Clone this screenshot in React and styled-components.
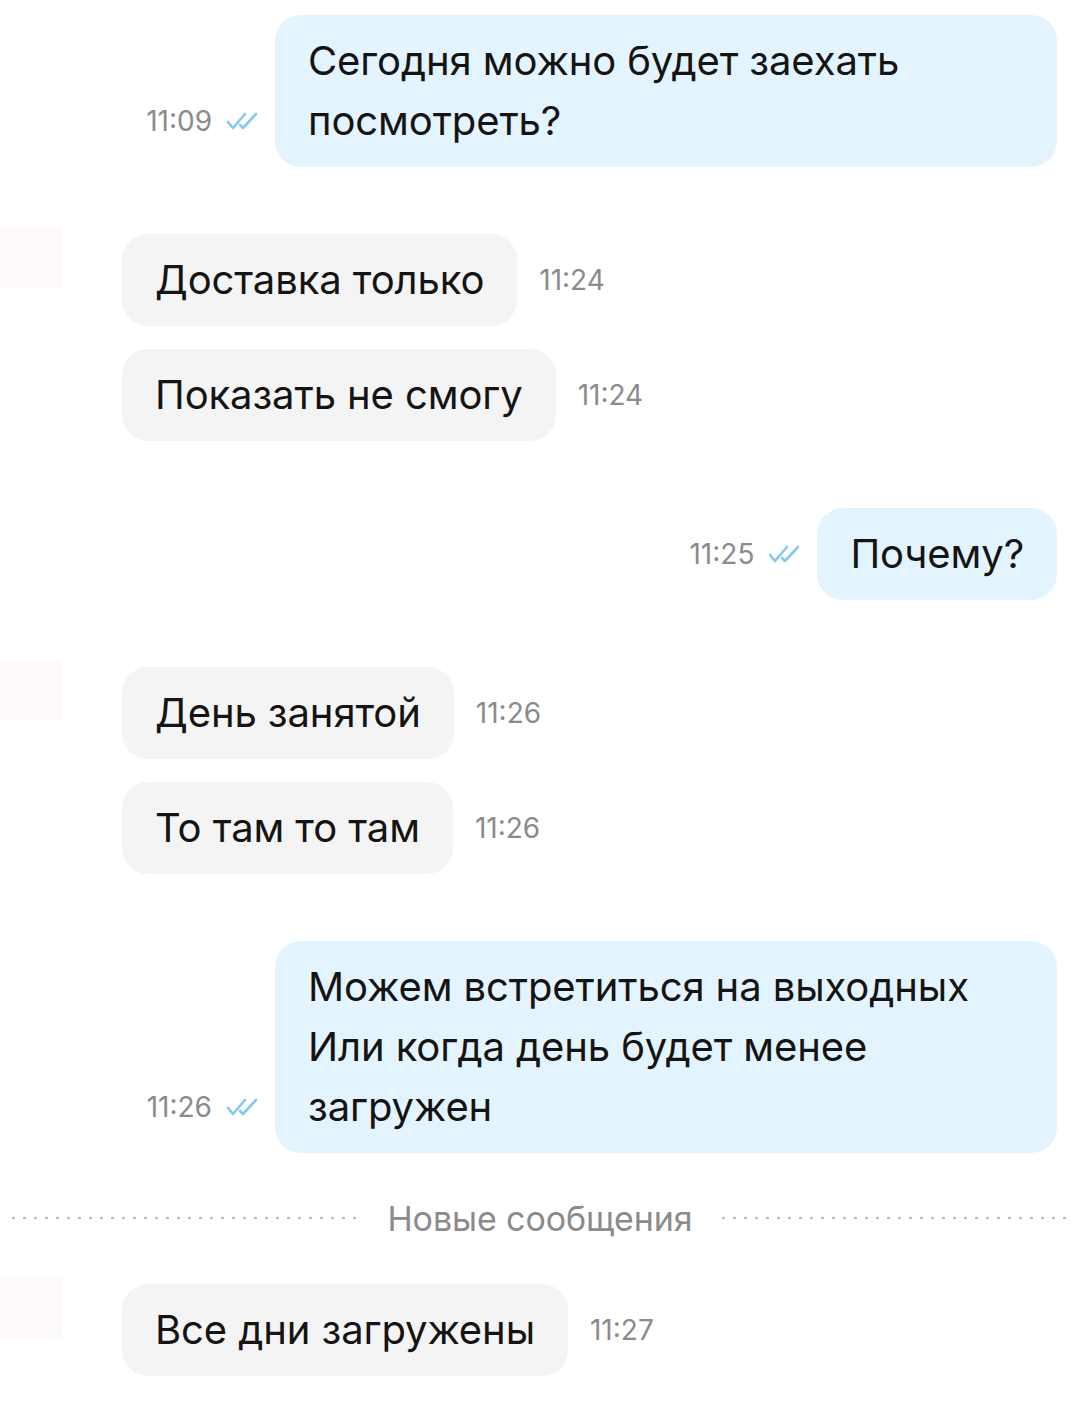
import styled, { createGlobalStyle } from "styled-components"

const GlobalStyle = createGlobalStyle`
    body{
        margin:0;
        background:#fff;
        font-family: Inter, Roboto, "Liberation Sans", sans-serif;
    }
`

const messages = [
    { id: 1, out: true, time: "11:09", text: "Сегодня можно будет заехать посмотреть?" },
    { id: 2, out: false, group: [
        { time: "11:24", text: "Доставка только" },
        { time: "11:24", text: "Показать не смогу" },
    ]},
    { id: 3, out: true, time: "11:25", text: "Почему?" },
    { id: 4, out: false, group: [
        { time: "11:26", text: "День занятой" },
        { time: "11:26", text: "То там то там" },
    ]},
    { id: 5, out: true, time: "11:26", text: "Можем встретиться на выходных\nИли когда день будет менее загружен" },
]

function Check(){
    return(
        <svg width="36" height="20" viewBox="0 0 36 20" fill="none" stroke="#86c9ef" strokeWidth="2.6" strokeLinecap="round" strokeLinejoin="round">
            <path d="M2 11 L7 17 L19 3"/>
            <path d="M14 14 L17 17 L30 3"/>
        </svg>
    )
}

function Outgoing({msg}){
    return(
        <OutRow>
            <Meta>
                <Time>{msg.time}</Time>
                <Check/>
            </Meta>
            <Bubble $out>{msg.text}</Bubble>
        </OutRow>
    )
}

function IncomingGroup({group}){
    return(
        <InGroup>
            <Avatar/>
            <InColumn>
                {group.map((m, i)=>(
                    <InRow key={i}>
                        <Bubble>{m.text}</Bubble>
                        <Time>{m.time}</Time>
                    </InRow>
                ))}
            </InColumn>
        </InGroup>
    )
}

export default function App(){
    return(
        <>
        <GlobalStyle/>
        <Chat>
            {messages.map((msg)=>
                msg.out
                    ? <Outgoing key={msg.id} msg={msg}/>
                    : <IncomingGroup key={msg.id} group={msg.group}/>
            )}
            <Divider>
                <Dots/>
                <span>Новые сообщения</span>
                <Dots/>
            </Divider>
            <IncomingGroup group={[{ time: "11:27", text: "Все дни загружены" }]}/>
        </Chat>
        </>
    )
}

const Chat = styled.div`
    display:flex;
    flex-direction:column;
    gap:67px;
    padding:15px 23px 26px 0;
`

const OutRow = styled.div`
    display:flex;
    justify-content:flex-end;
    align-items:flex-end;
    gap:13px;
`

const Meta = styled.div`
    display:flex;
    align-items:center;
    gap:14px;
    height:60px;
    margin-bottom:16px;
`

const Time = styled.span`
    font-size:28px;
    color:#8b8b8b;
    line-height:60px;
    letter-spacing:0;
`

const Bubble = styled.div`
    max-width:716px;
    padding:16px 33px;
    border-radius:26px;
    background:${p => p.$out ? "#e4f4fe" : "#f4f4f4"};
    color:#141414;
    font-size:40px;
    line-height:60px;
    letter-spacing:-0.1px;
    white-space:pre-line;
`

const InGroup = styled.div`
    display:flex;
    align-items:flex-start;
`

const Avatar = styled.div`
    width:62px;
    height:62px;
    margin-top:-8px;
    background:#fdf9fd;
    flex-shrink:0;
`

const InColumn = styled.div`
    display:flex;
    flex-direction:column;
    gap:23px;
    margin-left:60px;
`

const InRow = styled.div`
    display:flex;
    align-items:flex-end;
    gap:22px;
    ${Time}{
        margin-bottom:16px;
    }
`

const Divider = styled.div`
    display:flex;
    align-items:center;
    gap:25px;
    padding-left:8px;
    margin:-22px -15px -21px 0;
    height:40px;
    span{
        font-size:34px;
        color:#8b8b8b;
        letter-spacing:-0.1px;
        white-space:nowrap;
    }
`

const Dots = styled.div`
    flex:1;
    height:4px;
    background-image:radial-gradient(circle, #bdbdbd 1.3px, transparent 1.6px);
    background-size:11px 4px;
    background-repeat:repeat-x;
`
